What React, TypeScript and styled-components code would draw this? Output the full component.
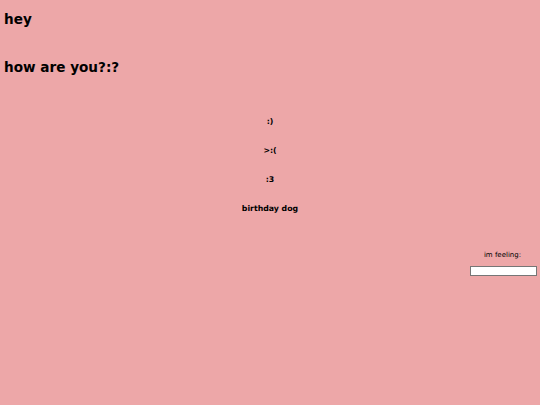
import styled, { createGlobalStyle } from "styled-components";

const GlobalStyle = createGlobalStyle`
  html, body {
    margin: 0;
    padding: 0;
    background: #eda7a8;
  }
  body {
    font-family: "DejaVu Sans", Verdana, sans-serif;
    color: #000;
    -webkit-font-smoothing: antialiased;
  }
`;

const Page = styled.div`
  min-height: 405px;
  padding: 4px;
  box-sizing: border-box;
`;

const Heading = styled.h1<{ $gap?: number }>`
  font-size: 13.6px;
  font-weight: bold;
  line-height: 16px;
  margin: ${(p) => p.$gap ?? 0}px 0 0;
`;

const FaceList = styled.div`
  display: flex;
  flex-direction: column;
  align-items: center;
  gap: 19px;
  margin-top: 42px;
`;

const Face = styled.div`
  font-size: 7.8px;
  font-weight: bold;
  line-height: 10px;
`;

const Feeling = styled.div`
  display: flex;
  flex-direction: column;
  align-items: flex-end;
  gap: 6px;
  margin-top: 37px;
`;

const FeelingLabel = styled.label`
  font-size: 7px;
  line-height: 9px;
  width: 67px;
  text-align: center;
  color: #000;
`;

const FeelingInput = styled.input`
  width: 67px;
  height: 10px;
  box-sizing: border-box;
  border: 1px solid #767676;
  background: #fff;
  padding: 0;
  margin: 0 -1px 0 0;
`;

export default function App() {
  return (
    <>
      <GlobalStyle />
      <Page>
        <Heading $gap={6.5}>hey</Heading>
        <Heading $gap={32.5}>how are you?:?</Heading>
        <FaceList>
          <Face>:)</Face>
          <Face>&gt;:(</Face>
          <Face>:3</Face>
          <Face>birthday dog</Face>
        </FaceList>
        <Feeling>
          <FeelingLabel>im feeling:</FeelingLabel>
          <FeelingInput type="text" />
        </Feeling>
      </Page>
    </>
  );
}
